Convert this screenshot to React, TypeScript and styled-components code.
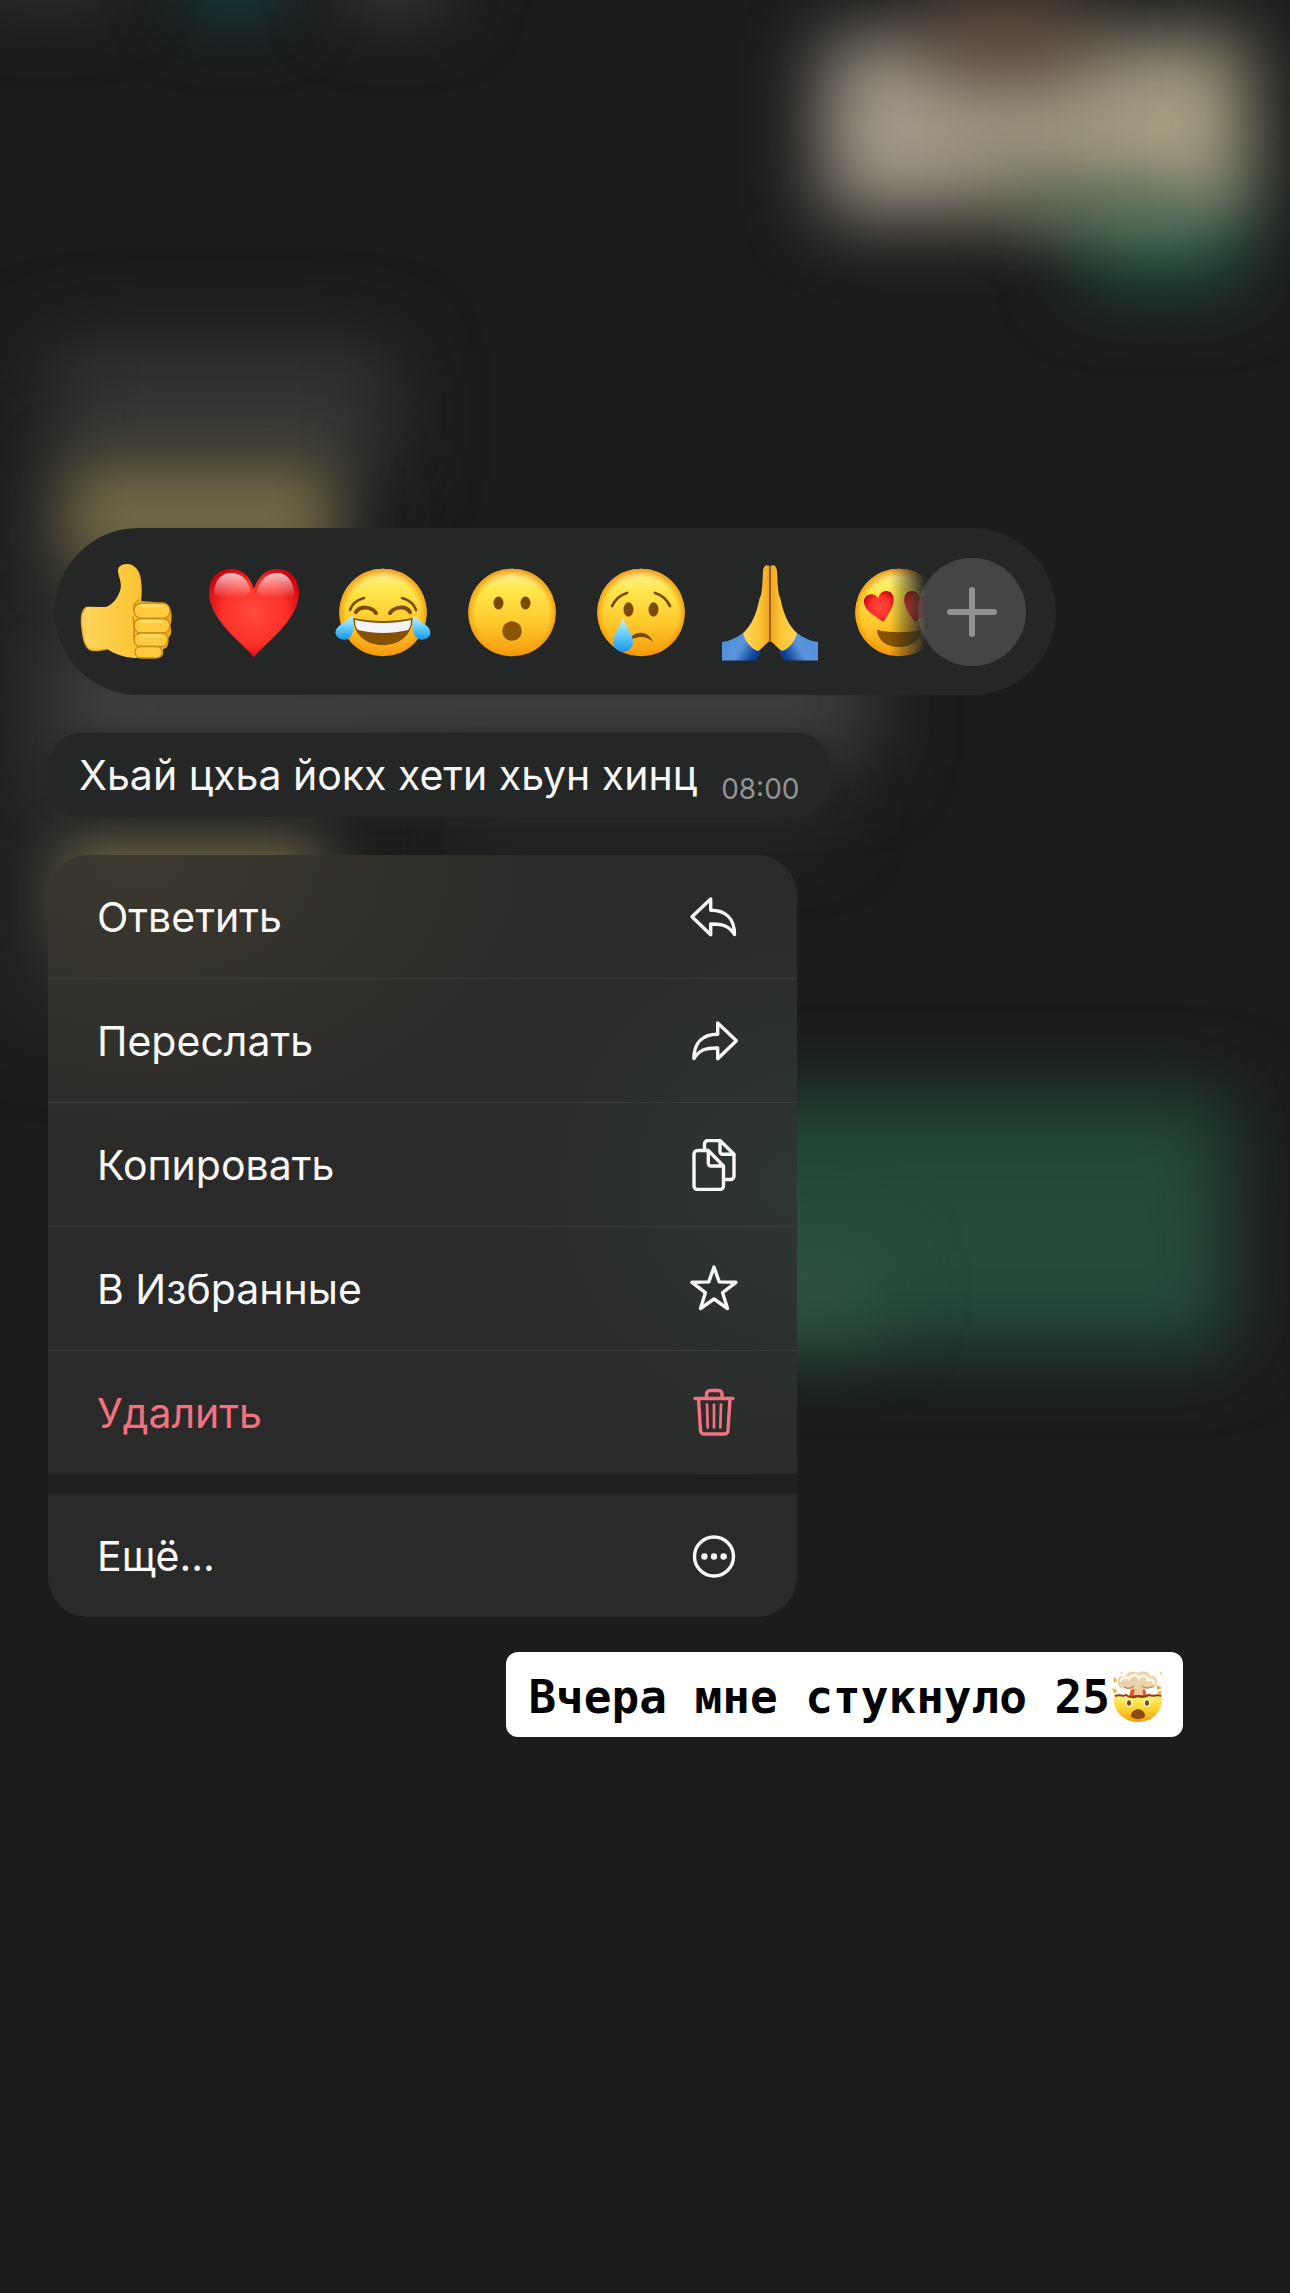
import React from "react";
import styled, { createGlobalStyle } from "styled-components";

const GlobalStyle = createGlobalStyle`
  * { box-sizing: border-box; }
  body {
    margin: 0;
    background: #1c1c1c;
    font-family: Inter, "Liberation Sans", sans-serif;
  }
  button { font: inherit; color: inherit; border: 0; background: none; cursor: pointer; }
`;

const Screen = styled.main`
  position: relative;
  min-height: 100vh;
  padding: 528px 48px 48px;
  display: flex;
  flex-direction: column;
  overflow: hidden;
`;

/* Blurred conversation behind the open menu */
const Backdrop = styled.div`
  position: absolute;
  inset: 0;
  overflow: hidden;
  pointer-events: none;
`;

interface GlowProps {
  $x: number;
  $y: number;
  $w: number;
  $h: number;
  $color: string;
  $blur?: number;
}

const Glow = styled.div<GlowProps>`
  position: absolute;
  left: ${(p) => p.$x}px;
  top: ${(p) => p.$y}px;
  width: ${(p) => p.$w}px;
  height: ${(p) => p.$h}px;
  background: ${(p) => p.$color};
  filter: blur(${(p) => p.$blur ?? 28}px);
`;

const Stack = styled.div`
  position: relative;
  display: flex;
  flex-direction: column;
  align-items: flex-start;
  gap: 38px;
`;

const ReactionBar = styled.div`
  display: flex;
  align-items: center;
  width: 100%;
  max-width: 1001px;
  height: 167px;
  margin-left: 7px;
  padding: 0 30px 0 5px;
  border-radius: 84px;
  background: #242726;
`;

const ReactionTrack = styled.div`
  flex: 1;
  min-width: 0;
  display: flex;
  overflow: hidden;
  mask-image: linear-gradient(to right, #000 calc(100% - 36px), transparent);
`;

const ReactionButton = styled.button`
  flex: 0 0 129px;
  display: flex;
  justify-content: center;
  padding: 0;
  svg { display: block; width: 104px; height: 104px; }
`;

const MoreReactions = styled.button`
  flex: none;
  display: flex;
  align-items: center;
  justify-content: center;
  width: 108px;
  height: 108px;
  margin-left: -8px;
  padding: 0;
  border-radius: 50%;
  background: #434446;
`;

const Bubble = styled.article`
  display: flex;
  align-items: center;
  gap: 24px;
  height: 84px;
  padding: 0 31px;
  border-radius: 34px;
  background: #242726;
  box-shadow: 0 0 16px rgba(36, 39, 38, 0.6);
`;

const BubbleText = styled.p`
  margin: 0;
  font-size: 41px;
  line-height: 48px;
  color: #f8f8f8;
  white-space: nowrap;
`;

const BubbleTime = styled.time`
  align-self: flex-end;
  padding-bottom: 14px;
  font-size: 28px;
  line-height: 28px;
  color: #929392;
`;

const Menu = styled.div`
  width: 100%;
  max-width: 749px;
  border-radius: 40px;
  overflow: hidden;
  background:
    radial-gradient(460px 320px at 90px 0, #3c382e, rgba(60, 56, 46, 0) 100%),
    radial-gradient(320px 320px at 100% 330px, #2e3731, rgba(46, 55, 49, 0) 100%),
    #2a2a2a;
`;

const MenuItem = styled.button<{ $danger?: boolean; $line?: boolean }>`
  box-sizing: content-box;
  display: flex;
  align-items: center;
  justify-content: space-between;
  width: calc(100% - 106px);
  height: 123px;
  padding: 0 57px 0 49px;
  border-bottom: ${(p) => (p.$line ? "1px solid #3a3b3a" : "0")};
  font-size: 41px;
  line-height: 48px;
  color: ${(p) => (p.$danger ? "#f4717f" : "#f8f8f8")};
  text-align: left;
  svg { display: block; width: 52px; height: 52px; }
`;

const MenuGap = styled.div`
  height: 20px;
  background: #202020;
`;

const Caption = styled.p`
  position: relative;
  align-self: flex-end;
  display: flex;
  align-items: center;
  height: 85px;
  margin: 35px 59px 0 0;
  padding: 4px 17px 0 22px;
  border-radius: 12px;
  background: #fff;
  color: #000;
  font-family: "DejaVu Sans Mono", "Liberation Mono", monospace;
  font-size: 46px;
  line-height: 56px;
  font-weight: 700;
  white-space: nowrap;
  svg { display: block; width: 56px; height: 56px; }
`;

const Defs = () => (
  <svg width="0" height="0" aria-hidden="true" style={{ position: "absolute" }}>
    <defs>
      <linearGradient id="face" x1="0" y1="0" x2="0" y2="1">
        <stop offset="0" stopColor="#fff3a0" />
        <stop offset=".25" stopColor="#ffe64c" />
        <stop offset=".6" stopColor="#ffcb2e" />
        <stop offset="1" stopColor="#f59a0c" />
      </linearGradient>
      <radialGradient id="rim" cx=".5" cy=".52" r=".52">
        <stop offset=".8" stopColor="#f59a0c" stopOpacity="0" />
        <stop offset="1" stopColor="#f08c00" stopOpacity=".9" />
      </radialGradient>
      <linearGradient id="tear" x1="0" y1="0" x2="0" y2="1">
        <stop offset="0" stopColor="#c9f1ff" />
        <stop offset=".55" stopColor="#5cc7fb" />
        <stop offset="1" stopColor="#1b93e6" />
      </linearGradient>
      <radialGradient id="heart" cx=".5" cy=".5" r=".6">
        <stop offset="0" stopColor="#ff4a3c" />
        <stop offset=".6" stopColor="#fb3029" />
        <stop offset="1" stopColor="#c8000f" />
      </radialGradient>
      <linearGradient id="gloss" x1="0" y1="0" x2="0" y2="1">
        <stop offset="0" stopColor="#fff" stopOpacity=".75" />
        <stop offset="1" stopColor="#fff" stopOpacity="0" />
      </linearGradient>
      <linearGradient id="skin" x1="0" y1="0" x2="1" y2="0">
        <stop offset="0" stopColor="#ffd55c" />
        <stop offset=".6" stopColor="#fdc536" />
        <stop offset="1" stopColor="#efa320" />
      </linearGradient>
      <linearGradient id="sleeve" x1="0" y1="0" x2="1" y2=".4">
        <stop offset="0" stopColor="#4f8fe0" />
        <stop offset=".6" stopColor="#5a94dc" />
        <stop offset="1" stopColor="#0c3f96" />
      </linearGradient>
    </defs>
  </svg>
);

const Emoji = ({ children }: { children: React.ReactNode }) => (
  <svg viewBox="0 0 104 104" fill="none" aria-hidden="true">
    {children}
  </svg>
);

const Face = () => (
  <>
    <circle cx="52" cy="52.5" r="43.8" fill="url(#face)" />
    <circle cx="52" cy="52.5" r="43.8" fill="url(#rim)" />
  </>
);

const BROWN = "#7b4a06";

const ThumbsUp = () => (
  <Emoji>
    <path
      d="M54 4c-6 0-9.500 3-9 8 1 6 4.500 12 2 19-2.500 7-6.500 13-14 16-6 .5-13-1-19 0C8 50 8 60 9 68c1 9 2 17 7 21 5 3 12 1 18 0 8 5 16 8 27 9h22c6 0 8-3 7-9 5-1 6-5 5-11 4-3 4-8 2-12 2-4 2-9 1-15-3-8-15-9-30-10 1-7 1-13 0-21C67 10 61 4 54 4Z"
      fill="url(#skin)"
    />
    <path d="M14 47c-6 3-6 13-5 21 1 9 2 17 7 21 5 3 12 1 18 0" stroke="#e9a42b" strokeWidth="1.500" />
    <g fill="#ffca3e" stroke="#c98a1c" strokeWidth="1.300">
      <rect x="61" y="43" width="36" height="15.500" rx="7.500" />
      <rect x="61" y="58.500" width="36" height="14.500" rx="7" />
      <rect x="61" y="73" width="34" height="13.500" rx="6.500" />
      <rect x="62" y="86.500" width="27" height="11.500" rx="5.500" />
    </g>
    <path d="M68 46h20M68 61.500h20M68 76h18" stroke="#ffdc63" strokeWidth="3" strokeLinecap="round" />
    <path d="M66 40c-3 2-6 5-5 10M60 57c2 8 1 14 1 22" stroke="#c98712" strokeWidth="1.500" strokeLinecap="round" />
  </Emoji>
);

const RedHeart = () => (
  <Emoji>
    <path d="M52 97C39 82 7 59 7 33 7 18 16 9 29 9c11 0 19 7 23 20C56 16 64 9 75 9c13 0 22 9 22 24 0 26-32 49-45 64Z" fill="url(#heart)" />
    <path d="M12 35c0-14 7-22 17-22 11 0 18 8 20 19-10 9-27 5-37 3Z" fill="url(#gloss)" />
    <path d="M92 35c0-14-7-22-17-22-11 0-18 8-20 19 10 9 27 5 37 3Z" fill="url(#gloss)" />
  </Emoji>
);

const Joy = () => (
  <Emoji>
    <Face />
    <path d="M19 50c2-6 7-10 14-12M85 50c-2-6-7-10-14-12" stroke={BROWN} strokeWidth="2.500" strokeLinecap="round" />
    <path d="M25 52c4-6 15-6 20 1M79 52c-4-6-15-6-20 1" stroke={BROWN} strokeWidth="4" strokeLinecap="round" />
    <path d="M22 58c20 4 40 4 60 0-1 17-13 27-30 27S23 75 22 58Z" fill="#855204" />
    <path d="M24 60c18 4 38 4 56 0 0 5-1 8-3 10-17 4-33 4-50 0-2-2-3-5-3-10Z" fill="#f4f4fa" />
    <path d="M22 56c1 10 1 15-2 20-3 5-12 5-15-1-3-8 9-13 17-19ZM82 56c-1 10-1 15 2 20 3 5 12 5 15-1 3-8-9-13-17-19Z" fill="url(#tear)" />
  </Emoji>
);

const Surprised = () => (
  <Emoji>
    <Face />
    <ellipse cx="38.500" cy="43" rx="5" ry="6.500" fill={BROWN} />
    <ellipse cx="65.500" cy="43" rx="5" ry="6.500" fill={BROWN} />
    <circle cx="52" cy="71" r="9.800" fill="#8a5606" />
  </Emoji>
);

const Sad = () => (
  <Emoji>
    <Face />
    <path d="M23 46c3-6 8-11 15-13M81 46c-3-6-8-11-15-13" stroke={BROWN} strokeWidth="2.800" strokeLinecap="round" />
    <ellipse cx="39.500" cy="49.500" rx="5" ry="7.200" fill={BROWN} />
    <ellipse cx="64.500" cy="49.500" rx="5" ry="7.200" fill={BROWN} />
    <path d="M40 81c3-10 19-12 24 1-7-7-16-6-24-1Z" fill={BROWN} />
    <path d="M34 58c3 9 10 16 10 24a10 10 0 0 1-20 0c0-8 7-15 10-24Z" fill="url(#tear)" />
  </Emoji>
);

const PrayHalf = () => (
  <>
    <path d="M4 82c8-1 14-4 21-9l18 18c-2 4-3 7-6 9.500H4Z" fill="url(#sleeve)" />
    <path d="M51.500 6c-4-2-6 1-6.500 5-.500 9-.500 17-2 24-2 4-2 7-4 14-3 10-8 19-14 24 2 8 8 16 15 18 5-3 8-8 12-10Z" fill="url(#skin)" />
  </>
);

const Pray = () => (
  <Emoji>
    <PrayHalf />
    <g transform="translate(104 0) scale(-1 1)"><PrayHalf /></g>
    <path d="M52 8v74" stroke="#9c5c0a" strokeWidth="1.800" />
  </Emoji>
);

const eyeHeart = "M0 16C-6 10-15 3-15-6c0-8 11-11 15-2 4-9 15-6 15 2 0 9-9 16-15 22Z";

const HeartEyes = () => (
  <Emoji>
    <Face />
    <path d={eyeHeart} transform="translate(33 46) rotate(-12)" fill="url(#heart)" />
    <path d={eyeHeart} transform="translate(71 46) rotate(12)" fill="url(#heart)" />
    <path d="M30 70c15 3 29 3 44 0 0 11-10 17-22 17s-21-6-22-17Z" fill="#855204" />
  </Emoji>
);

const MindBlown = () => (
  <svg viewBox="0 0 56 56" fill="none" role="img" aria-label="🤯">
    <path d="M22 16h12l3 12H19Z" fill="#d8572c" />
    <path d="M25 15h7l1 11h-9Z" fill="#f4c59b" />
    <path d="M8 14c-2-5 3-8 7-7 3-5 9-5 13-3 5-3 11-1 12 3 5-1 8 3 7 7 0 4-4 6-8 5-5 3-9 1-12 1s-8 2-12-1c-4 1-7-1-7-5Z" fill="#e9d3ac" />
    <path d="M11 11c3-4 6-3 8-1 2-5 8-5 10-1 4-4 9-1 9 2 3-1 5 0 6 3" stroke="#fbf3e2" strokeWidth="3" strokeLinecap="round" />
    <path d="M14 18c4 2 8 1 10-1M32 17c4 3 8 2 11 0" stroke="#c98a52" strokeWidth="1.500" />
    <path d="M4 27c6-3 9 1 12-1 4 2 7 3 12 1 4 2 7 1 11-1 5 2 8-2 13 1 2 14-9 26-24 26S2 41 4 27Z" fill="url(#face)" />
    <path d="M5 27c5-2 8 1 11-1 4 3 7 3 12 1 4 2 7 1 11-1 5 2 8-1 12 1" stroke="#8f3d0c" strokeWidth="2" />
    <ellipse cx="19" cy="34" rx="3.600" ry="4.200" fill="#fff2c8" />
    <ellipse cx="37" cy="34" rx="3.600" ry="4.200" fill="#fff2c8" />
    <ellipse cx="19" cy="34" rx="2" ry="2.800" fill={BROWN} />
    <ellipse cx="37" cy="34" rx="2" ry="2.800" fill={BROWN} />
    <path d="M21 47c0-9 14-9 14 0-1 4-13 4-14 0Z" fill="#8a4a10" />
    <path d="m4 8 3 3-3 3ZM2 19l5 2-2 4ZM47 16l5 3-5 2ZM50 3l2 1-1 2ZM11 3l2 1-2 1ZM47 23l5-1-2 4Z" fill="#f5a623" />
  </svg>
);

const LineIcon = ({ children }: { children: React.ReactNode }) => (
  <svg viewBox="-2 -2 52 52" fill="none" stroke="currentColor" strokeWidth="3.4" strokeLinecap="round" strokeLinejoin="round" aria-hidden="true">
    {children}
  </svg>
);

const arrow = "M2 23.700 20.700 6v11.200C35 17.200 44.500 25 44.500 41.500 39 33 33 30.800 20.700 31v10.800Z";

const ReplyIcon = () => <LineIcon><path d={arrow} /></LineIcon>;
const ForwardIcon = () => (
  <LineIcon><path d={arrow} transform="translate(48.400 0) scale(-1 1)" /></LineIcon>
);
const CopyIcon = () => (
  <LineIcon>
    <path d="M18.300 9.500H7.500a3.500 3.500 0 0 0-3.500 3.500v32a3.500 3.500 0 0 0 3.500 3.500h22.500a3.500 3.500 0 0 0 3.500-3.500V25L18.300 9.500v13a2.500 2.500 0 0 0 2.500 2.500h12.700" />
    <path d="M14.500 9V3a3.500 3.500 0 0 1 3.500-3.500h12L44 13.300V35a3.500 3.500 0 0 1-3.500 3.500h-6.500M30-.5v11.300a2.500 2.500 0 0 0 2.500 2.500H44" />
  </LineIcon>
);
const StarIcon = () => (
  <LineIcon>
    <path d="m24 2 5.200 14.900 16.800.4-13.400 10.400 4.900 15.800L24 34l-13.500 9.500 4.900-15.800L2 17.300l16.800-.4Z" />
  </LineIcon>
);
const TrashIcon = () => (
  <LineIcon>
    <path d="M5 9.500h38M16.500 9.500V5a3.500 3.500 0 0 1 3.500-3.500h8.500A3.500 3.500 0 0 1 32 5v4.500M8.500 9.500l2 32a3.500 3.500 0 0 0 3.500 3.500h20.500a3.500 3.500 0 0 0 3.500-3.500l2-32" />
    <path d="m17 15.500.7 23M24 15.500v23M31 15.500l-.7 23" strokeWidth="2.700" />
  </LineIcon>
);
const MoreIcon = () => (
  <LineIcon>
    <circle cx="24" cy="24.500" r="19.500" />
    <g fill="currentColor" stroke="none">
      <circle cx="14.400" cy="24.500" r="3.200" />
      <circle cx="24" cy="24.500" r="3.200" />
      <circle cx="33.600" cy="24.500" r="3.200" />
    </g>
  </LineIcon>
);

const glows: GlowProps[] = [
  { $x: -30, $y: -60, $w: 150, $h: 66, $color: "#303030", $blur: 34 },
  { $x: 185, $y: -60, $w: 100, $h: 76, $color: "#123f40", $blur: 34 },
  { $x: 340, $y: -60, $w: 110, $h: 74, $color: "#373737", $blur: 34 },
  { $x: 1080, $y: 170, $w: 165, $h: 116, $color: "#1f5240", $blur: 38 },
  { $x: 826, $y: 40, $w: 420, $h: 172, $color: "linear-gradient(to right, #aca294, #989079 45%, #aea688)", $blur: 38 },
  { $x: 930, $y: 0, $w: 150, $h: 70, $color: "#5d463b", $blur: 38 },
  { $x: 1010, $y: 190, $w: 180, $h: 30, $color: "#4f6a50", $blur: 30 },
  { $x: 50, $y: 350, $w: 340, $h: 130, $color: "#383838", $blur: 42 },
  { $x: 10, $y: 480, $w: 330, $h: 540, $color: "#292a2a", $blur: 44 },
  { $x: 66, $y: 462, $w: 268, $h: 110, $color: "#726944", $blur: 30 },
  { $x: 60, $y: 645, $w: 810, $h: 120, $color: "#3f4140", $blur: 40 },
  { $x: 450, $y: 790, $w: 380, $h: 50, $color: "#2b2b2b", $blur: 34 },
  { $x: 66, $y: 850, $w: 250, $h: 90, $color: "#7a7046", $blur: 26 },
  { $x: 600, $y: 1094, $w: 630, $h: 256, $color: "linear-gradient(#1e4733, #284c3c 55%, #1f4b3a)", $blur: 38 },
  { $x: 730, $y: 1250, $w: 150, $h: 80, $color: "#31543f", $blur: 38 },
];

const reactions = [
  { name: "👍", Icon: ThumbsUp },
  { name: "❤️", Icon: RedHeart },
  { name: "😂", Icon: Joy },
  { name: "😮", Icon: Surprised },
  { name: "😢", Icon: Sad },
  { name: "🙏", Icon: Pray },
  { name: "😍", Icon: HeartEyes },
];

const actions = [
  { label: "Ответить", Icon: ReplyIcon },
  { label: "Переслать", Icon: ForwardIcon },
  { label: "Копировать", Icon: CopyIcon },
  { label: "В Избранные", Icon: StarIcon },
  { label: "Удалить", Icon: TrashIcon, danger: true },
];

export default function App() {
  return (
    <>
      <GlobalStyle />
      <Screen>
        <Defs />
        <Backdrop aria-hidden="true">
          {glows.map((glow, i) => (
            <Glow key={i} {...glow} />
          ))}
        </Backdrop>
        <Stack>
          <ReactionBar>
            <ReactionTrack>
              {reactions.map(({ name, Icon }) => (
                <ReactionButton key={name} type="button" aria-label={name}>
                  <Icon />
                </ReactionButton>
              ))}
            </ReactionTrack>
            <MoreReactions type="button" aria-label="+">
              <svg width="52" height="52" viewBox="0 0 52 52" stroke="#929092" strokeWidth="6" strokeLinecap="round" aria-hidden="true">
                <path d="M26 4v44M4 26h44" />
              </svg>
            </MoreReactions>
          </ReactionBar>
          <Bubble>
            <BubbleText>Хьай цхьа йокх хети хьун хинц</BubbleText>
            <BubbleTime>08:00</BubbleTime>
          </Bubble>
          <Menu role="menu">
            {actions.map(({ label, Icon, danger }, i) => (
              <MenuItem key={label} type="button" role="menuitem" $danger={danger} $line={i < actions.length - 1}>
                {label}
                <Icon />
              </MenuItem>
            ))}
            <MenuGap />
            <MenuItem type="button" role="menuitem">
              Ещё...
              <MoreIcon />
            </MenuItem>
          </Menu>
        </Stack>
        <Caption>
          Вчера мне стукнуло 25
          <MindBlown />
        </Caption>
      </Screen>
    </>
  );
}
